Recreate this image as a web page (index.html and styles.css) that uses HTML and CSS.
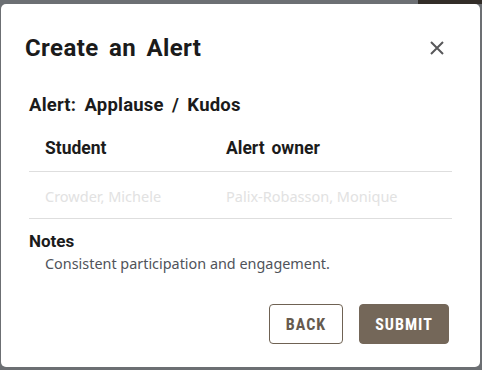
FILE: index.html
```html
<!DOCTYPE html>
<html>
<head>
<meta charset="utf-8">
<link rel="stylesheet" href="styles.css">
</head>
<body>
<div class="modal">
  <div class="head">
    <h1 class="title">Create an Alert</h1>
    <button class="close" aria-label="Close">
      <svg width="14" height="14" viewBox="0 0 14 14"><path d="M1 1L13 13M13 1L1 13" stroke="#58585a" stroke-width="2" fill="none"/></svg>
    </button>
  </div>
  <h2 class="sub">Alert: Applause / Kudos</h2>
  <div class="table">
    <div class="row th"><div class="c1">Student</div><div class="c2">Alert owner</div></div>
    <div class="row td"><div class="c1">Crowder, Michele</div><div class="c2">Palix-Robasson, Monique</div></div>
  </div>
  <div class="notes">
    <div class="notes-label">Notes</div>
    <div class="notes-text">Consistent participation and engagement.</div>
  </div>
  <div class="actions">
    <button class="btn back">BACK</button>
    <button class="btn submit">SUBMIT</button>
  </div>
</div>
</body>
</html>
```
FILE: styles.css
```css
html, body { margin: 0; padding: 0; }
body {
  width: 482px;
  height: 370px;
  overflow: hidden;
  background: linear-gradient(to right, #6c6f73 418px, #322d28 418px) top left / 100% 4px no-repeat, #6c6f73;
  font-family: "Noto Sans", sans-serif;
}
.modal {
  margin: 4px 2px 0 1px;
  height: 363px;
  background: #fff;
  border-radius: 5px;
  box-sizing: border-box;
  padding: 0 28px;
  display: flex;
  flex-direction: column;
}
.head {
  display: flex;
  align-items: center;
  justify-content: space-between;
  height: 88px;
  margin-left: -4px;
}
.title {
  margin: 0;
  font-family: Roboto, sans-serif;
  font-weight: 700;
  font-size: 24px;
  letter-spacing: 0.4px;
  word-spacing: 4px;
  color: #1b1b1b;
}
.close {
  border: 0;
  background: none;
  padding: 0;
  width: 14px;
  height: 14px;
  margin-right: 8px;
  display: flex;
}
.sub {
  margin: 1px 0 0 0;
  font-family: Roboto, sans-serif;
  font-weight: 700;
  font-size: 18.5px;
  letter-spacing: 0.2px;
  word-spacing: 3.5px;
  color: #1b1b1b;
  line-height: 24px;
}
.table { margin-top: 14px; }
.row { display: flex; border-bottom: 1px solid #dedede; }
.c1 { width: 181px; padding-left: 16px; }
.th { height: 41px; padding-bottom: 6px; box-sizing: border-box; align-items: center; font-family: Roboto, sans-serif; font-weight: 700; font-size: 17.5px; color: #1b1b1b; word-spacing: 2.5px; }
.td { height: 47px; align-items: center; font-size: 14.5px; color: #e2e2e2; padding-top: 1px; box-sizing: border-box; }
.notes { margin-top: 12px; }
.notes-label { font-family: Roboto, sans-serif; font-weight: 700; font-size: 17px; color: #1b1b1b; line-height: 20px; }
.notes-text { padding-left: 16px; font-size: 14.4px; color: #50535a; line-height: 20px; margin-top: 3px; }
.actions {
  margin-top: auto;
  margin-bottom: 23px;
  display: flex;
  justify-content: flex-end;
  gap: 16px;
  margin-right: 3px;
}
.btn {
  height: 40px;
  box-sizing: border-box;
  border-radius: 4px;
  font-family: "Liberation Sans Narrow", "Roboto Condensed", Roboto, sans-serif;
  font-weight: 700;
  font-size: 16px;
  letter-spacing: 1px;
  cursor: pointer;
}
.back { width: 74px; background: #fff; border: 1px solid #6f6253; color: #665a4e; }
.submit { width: 90px; background: #746759; border: 1px solid #746759; color: #fff; }
```
